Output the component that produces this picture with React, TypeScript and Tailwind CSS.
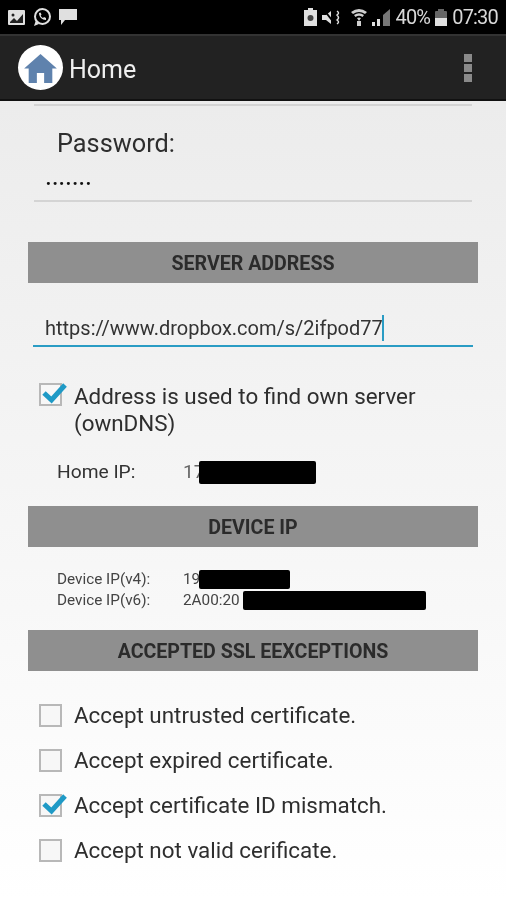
import React from "react";

function Check({ on }: { on?: boolean }) {
  return (
    <div className="relative h-[23px] w-[23px] shrink-0 border-2 border-[#b8b8b8] bg-[#f7f7f7]">
      {on && (
        <svg className="absolute -left-[2px] -top-[2px] overflow-visible" width="23" height="23" viewBox="0 0 23 23">
          <path d="M5 10 L12.5 17 L26 2" fill="none" stroke="#1f9ac6" strokeWidth="5" />
        </svg>
      )}
    </div>
  );
}

function Header({ children }: { children: React.ReactNode }) {
  return (
    <div className="mx-[28px] flex h-[41px] items-center justify-center bg-[#8f8f8f] pt-[3px] text-[19.6px] font-bold text-[#2b2b2b]">
      {children}
    </div>
  );
}

function Option({ label, on }: { label: string; on?: boolean }) {
  return (
    <div className="flex h-[45px] items-center gap-[12px] pl-[39px] text-[22.4px] text-[#2e2e2e]">
      <Check on={on} />
      <span>{label}</span>
    </div>
  );
}

export default function App() {
  return (
    <div className="flex h-[900px] w-[506px] flex-col overflow-hidden font-['Roboto',sans-serif] blur-[0.5px]">
      {/* status bar */}
      <div className="flex h-[34px] items-center justify-between bg-black pl-[8px] pr-[8px] text-[#d8d8d8]">
        <div className="flex items-center gap-[7px]">
          <svg width="17" height="15" viewBox="0 0 17 15">
            <rect width="17" height="15" rx="1" fill="#e0e0e0" />
            <path d="M2 12 L6 8 L9 11 L15 4 V13 H2 Z" fill="#222" />
            <circle cx="5" cy="5" r="1.5" fill="#222" />
          </svg>
          <svg width="20" height="20" viewBox="0 0 20 20">
            <circle cx="10.5" cy="9.5" r="7.5" fill="none" stroke="#e0e0e0" strokeWidth="2" />
            <path d="M2 19 L4 13 L7 17 Z" fill="#e0e0e0" />
            <path d="M7 6 C7 10 10 13 14 13 L14 11 L12 10 L11 11 C10 10.5 9 9.5 8.7 8.5 L9.5 7.5 L8.5 5.5 Z" fill="#e0e0e0" />
          </svg>
          <svg width="18" height="18" viewBox="0 0 18 18">
            <path d="M0 1 H18 V12 H6 L2 17 V12 H0 Z" fill="#e0e0e0" />
          </svg>
        </div>
        <div className="flex items-center gap-[5px]">
          <svg width="13" height="18" viewBox="0 0 13 18">
            <path d="M4 0 H9 V2 H13 V18 H0 V2 H4 Z" fill="#e0e0e0" />
            <circle cx="6.5" cy="10" r="3" fill="#444" />
          </svg>
          <svg width="19" height="17" viewBox="0 0 19 17">
            <path d="M0 6 H4 L9 2 V15 L4 11 H0 Z" fill="#e0e0e0" />
            <path d="M2 1 L13 15" stroke="#000" strokeWidth="2" />
            <path d="M15 2 Q18 4 15 6 Q18 9 15 11 Q18 13 15 15" fill="none" stroke="#e0e0e0" strokeWidth="1.5" />
          </svg>
          <svg className="ml-[5px]" width="16" height="18" viewBox="0 0 16 18">
            <path d="M0 4 Q8 -2 16 4 L14 6 Q8 2 2 6 Z M3 7 Q8 3.5 13 7 L11.5 9 Q8 6.5 4.5 9 Z M6 10 Q8 9 10 10 L8 13 Z" fill="#cfcfcf" />
            <rect x="6" y="13" width="4" height="5" fill="#cfcfcf" />
          </svg>
          <svg width="18" height="17" viewBox="0 0 18 17">
            <rect x="0" y="13" width="3" height="4" fill="#e0e0e0" />
            <rect x="5" y="10" width="3" height="7" fill="#e0e0e0" />
            <path d="M11 6 L18 0 V17 H11 Z" fill="#777" />
          </svg>
          <span className="text-[20px] leading-none tracking-[-0.8px]">40%</span>
          <svg width="12" height="17" viewBox="0 0 12 17">
            <rect x="0" y="2" width="12" height="15" rx="1" fill="#666" />
            <rect x="3" y="0" width="6" height="3" fill="#666" />
            <rect x="0" y="9" width="12" height="8" fill="#e0e0e0" />
          </svg>
          <span className="text-[20px] leading-none tracking-[-0.8px]">07:30</span>
        </div>
      </div>

      {/* app bar */}
      <div className="flex h-[67px] items-center justify-between border-t-2 border-b-2 border-t-[#333] border-b-[#111] bg-[#222222] pl-[18px] pr-[34px]">
        <div className="flex items-center gap-[6px]">
          <div className="flex h-[45px] w-[45px] items-center justify-center rounded-full bg-white">
            <svg width="33" height="30" viewBox="0 0 36 33">
              <path d="M18 1 L36 17 H31 V33 H22 V22 H14 V33 H5 V17 H0 Z" fill="#5f82ad" />
            </svg>
          </div>
          <span className="pt-[4px] text-[25px] text-[#efefef]">Home</span>
        </div>
        <div className="flex flex-col gap-[2px]">
          <div className="h-[8px] w-[8px] bg-[#8a8a8a]" />
          <div className="h-[8px] w-[8px] bg-[#8a8a8a]" />
          <div className="h-[8px] w-[8px] bg-[#8a8a8a]" />
        </div>
      </div>

      {/* form */}
      <div className="flex-1 bg-gradient-to-b from-[#ececec] to-white">
        <div className="mx-[34px] h-[5px] border-b-2 border-[#d4d4d4]" />
        <div className="mt-[23px] pl-[57px] text-[25.3px] leading-[30px] text-[#2e2e2e]">Password:</div>
        <div className="mx-[34px] mt-[7px] h-[36px] border-b-2 border-[#d4d4d4] pl-[12px] pt-[8px] text-[13px] leading-[20px] font-bold tracking-[2px] text-[#111]">
          •••••••
        </div>

        <div className="mt-[40px]">
          <Header>SERVER ADDRESS</Header>
        </div>

        <div className="mx-[33px] mt-[24px] flex h-[40px] items-start border-b-2 border-[#2a9cc4] pl-[12px] pt-[8px] text-[20px] leading-[26px] text-[#333]">
          <span>https://www.dropbox.com/s/2ifpod77</span>
          <span className="ml-[-1px] h-[26px] w-[2px] bg-[#2a9cc4]" />
        </div>

        <div className="mt-[36px] flex gap-[12px] pl-[39px] text-[22.4px] leading-[27px] text-[#2e2e2e]">
          <Check on />
          <span>
            Address is used to find own server
            <br />
            (ownDNS)
          </span>
        </div>

        <div className="mt-[20px] flex h-[30px] items-center pl-[57px] text-[19.2px] text-[#333]">
          <span className="w-[126px]">Home IP:</span>
          <span className="text-[#666]">17</span>
          <span className="ml-[-6px] h-[23px] w-[117px] rounded-[2px] bg-black" />
        </div>

        <div className="mt-[19px]">
          <Header>DEVICE IP</Header>
        </div>

        <div className="mt-[22px] pl-[57px] text-[15.3px] leading-[21px] text-[#444]">
          <div className="flex items-center">
            <span className="w-[126px]">Device IP(v4):</span>
            <span className="w-[16px]">19</span>
            <span className="h-[19px] w-[91px] rounded-[2px] bg-black" />
          </div>
          <div className="flex items-center">
            <span className="w-[126px]">Device IP(v6):</span>
            <span className="w-[60px]">2A00:20</span>
            <span className="h-[19px] w-[183px] rounded-[2px] bg-black" />
          </div>
        </div>

        <div className="mt-[19px]">
          <Header>ACCEPTED SSL EEXCEPTIONS</Header>
        </div>

        <div className="mt-[22px]">
          <Option label="Accept untrusted certificate." />
          <Option label="Accept expired certificate." />
          <Option label="Accept certificate ID mismatch." on />
          <Option label="Accept not valid cerificate." />
        </div>
      </div>
    </div>
  );
}
